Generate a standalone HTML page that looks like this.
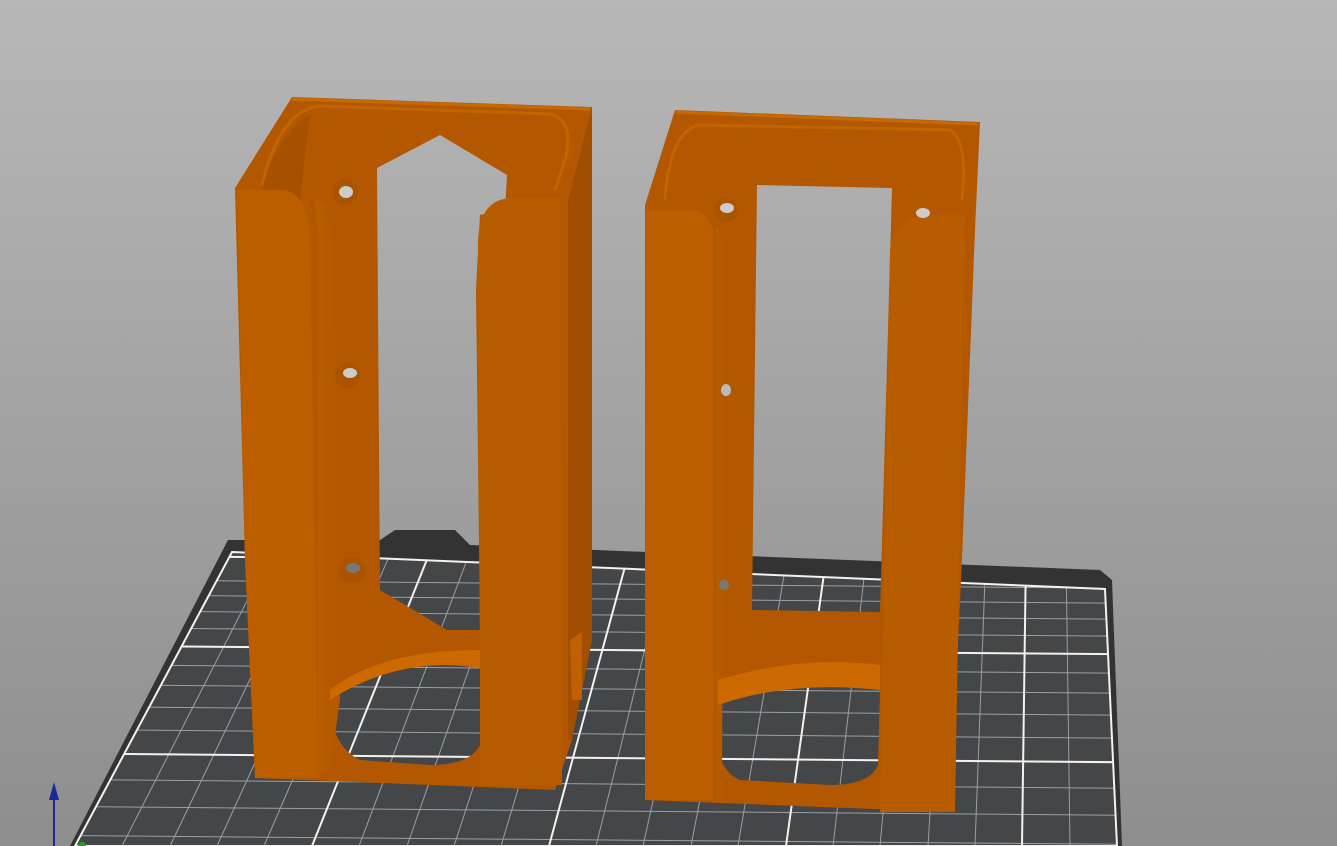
<!DOCTYPE html>
<html><head><meta charset="utf-8"><style>html,body{margin:0;padding:0;overflow:hidden}body{width:1337px;height:846px}</style></head>
<body>
<svg width="1337" height="846" viewBox="0 0 1337 846" xmlns="http://www.w3.org/2000/svg">
<defs>
<linearGradient id="bg" x1="0" y1="0" x2="0" y2="1"><stop offset="0" stop-color="#b7b7b7"/><stop offset="1" stop-color="#8e8e8e"/></linearGradient>
<clipPath id="bedc"><polygon points="232,552 1105,589 1117,846 75,846"/></clipPath>
<linearGradient id="col" x1="0" y1="0" x2="1" y2="0"><stop offset="0" stop-color="#a85300"/><stop offset=".25" stop-color="#b85c00"/><stop offset="1" stop-color="#b35800"/></linearGradient>
</defs>
<rect width="1337" height="846" fill="url(#bg)"/>
<polygon points="228,540 380,540 395,530 455,530 470,545 1100,570 1112,580 1122,846 70,846" fill="#333"/>
<polygon points="232,552 1105,589 1117,846 75,846" fill="#454647"/>
<g clip-path="url(#bedc)" stroke="#9aa0a8" stroke-width="1">
<line x1="272" y1="552" x2="122" y2="846"/><line x1="311" y1="552" x2="170" y2="846"/><line x1="351" y1="552" x2="217" y2="846"/><line x1="391" y1="552" x2="264" y2="846"/>
<line x1="470" y1="552" x2="359" y2="846"/><line x1="510" y1="552" x2="407" y2="846"/><line x1="550" y1="552" x2="454" y2="846"/><line x1="589" y1="552" x2="501" y2="846"/>
<line x1="669" y1="552" x2="596" y2="846"/><line x1="708" y1="552" x2="643" y2="846"/><line x1="748" y1="552" x2="691" y2="846"/><line x1="788" y1="552" x2="738" y2="846"/>
<line x1="867" y1="552" x2="833" y2="846"/><line x1="907" y1="552" x2="880" y2="846"/><line x1="946" y1="552" x2="928" y2="846"/><line x1="986" y1="552" x2="975" y2="846"/>
<line x1="1066" y1="552" x2="1070" y2="846"/>
<line x1="0" y1="579" x2="1337" y2="590"/><line x1="0" y1="594" x2="1337" y2="605"/><line x1="0" y1="610" x2="1337" y2="621"/><line x1="0" y1="627" x2="1337" y2="638"/>
<line x1="0" y1="664" x2="1337" y2="675"/><line x1="0" y1="684" x2="1337" y2="695"/><line x1="0" y1="706" x2="1337" y2="717"/><line x1="0" y1="729" x2="1337" y2="740"/>
<line x1="0" y1="779" x2="1337" y2="790"/><line x1="0" y1="806" x2="1337" y2="817"/><line x1="0" y1="835" x2="1337" y2="846"/>
</g>
<g clip-path="url(#bedc)" stroke="#f2f2f2" stroke-width="2">
<line x1="430" y1="552" x2="312" y2="846"/><line x1="629" y1="552" x2="549" y2="846"/><line x1="827" y1="552" x2="786" y2="846"/><line x1="1026" y1="552" x2="1022" y2="846"/>
<line x1="0" y1="555" x2="1337" y2="566"/><line x1="0" y1="645" x2="1337" y2="656"/><line x1="0" y1="753" x2="1337" y2="764"/>
</g>
<polygon points="232,552 1105,589 1117,846 75,846" fill="none" stroke="#f2f2f2" stroke-width="2"/>
<line x1="54" y1="846" x2="54" y2="792" stroke="#1a2a9a" stroke-width="2"/><polygon points="49,800 54,782 59,800" fill="#1a2a9a"/>
<circle cx="82" cy="846" r="4" fill="#2a9a2a"/>

<!-- left object -->
<path fill-rule="evenodd" fill="#b35800" d="M235,188 L292,97 L592,107 L592,640 L572,740 L555,790 L255,778 L245,560 Z
 M377,168 L440,135 L507,175 L505,210 L480,215 L476,290 L480,630 L447,630 L380,590 Z
 M330,700 Q400,655 480,668 L480,745 Q470,765 430,765 L360,760 Q330,745 330,700 Z"/>
<path fill="none" stroke="#c86a00" stroke-width="3" d="M292,99 L590,109"/>
<path fill="none" stroke="#c26400" stroke-width="3" d="M262,185 Q280,110 320,106 L550,114 Q575,120 565,160 L555,190"/>
<path fill="#a04e00" d="M262,188 Q280,130 310,115 L300,200 Z" opacity=".7"/>
<path fill="#bc5e00" d="M237,190 L285,190 Q305,195 310,230 L318,778 L255,778 L245,560 Z"/>
<path fill="url(#col)" d="M310,200 Q330,190 335,260 L340,700 L330,770 L318,778 L318,230 Z"/>
<path fill="#b85c00" d="M478,240 Q480,200 510,198 L560,198 L562,785 L480,785 L480,668 Z"/>
<path fill="#a04e00" d="M568,200 L592,107 L592,640 L572,740 L568,740 Z"/>
<path fill="#c06000" d="M570,640 L582,632 L582,700 L572,700 Z"/>
<path fill="#cc6900" d="M330,690 Q380,650 480,650 L480,668 Q400,655 330,700 Z"/>
<circle cx="345" cy="192" r="13" fill="#aa5400"/><ellipse cx="346" cy="192" rx="7" ry="6" fill="#ccc"/>
<circle cx="348" cy="375" r="13" fill="#aa5400"/><ellipse cx="350" cy="373" rx="7" ry="5" fill="#ccc"/>
<circle cx="352" cy="570" r="13" fill="#aa5400"/><ellipse cx="353" cy="568" rx="7" ry="5" fill="#777"/>

<!-- right object -->
<path fill-rule="evenodd" fill="#b35800" d="M645,205 L675,110 L980,122 L975,230 L962,560 L950,812 L645,800 Z
 M757,185 L892,188 L880,612 L752,610 Z
 M718,705 Q790,680 880,690 L878,765 Q870,785 830,785 L740,780 Q718,770 718,740 Z"/>
<path fill="none" stroke="#c86a00" stroke-width="3" d="M675,112 L978,124"/>
<path fill="none" stroke="#c26400" stroke-width="3" d="M665,200 Q670,130 700,125 L950,130 Q968,140 962,200"/>
<path fill="#bc5e00" d="M646,210 L695,210 Q712,215 715,240 L718,800 L645,800 Z"/>
<path fill="url(#col)" d="M714,230 Q722,220 724,260 L722,800 L714,800 Z"/>
<path fill="#b85c00" d="M890,250 Q895,218 925,215 L965,215 L955,812 L880,812 Z"/>
<path fill="#cc6900" d="M718,680 Q800,655 880,665 L880,690 Q790,680 718,705 Z"/>
<circle cx="726" cy="210" r="12" fill="#aa5400"/><ellipse cx="727" cy="208" rx="7" ry="5" fill="#ccc"/>
<ellipse cx="923" cy="213" rx="7" ry="5" fill="#ccc"/>
<ellipse cx="726" cy="390" rx="5" ry="6" fill="#bbb"/>
<ellipse cx="724" cy="585" rx="5" ry="5" fill="#777"/>
</svg>
</body></html>
